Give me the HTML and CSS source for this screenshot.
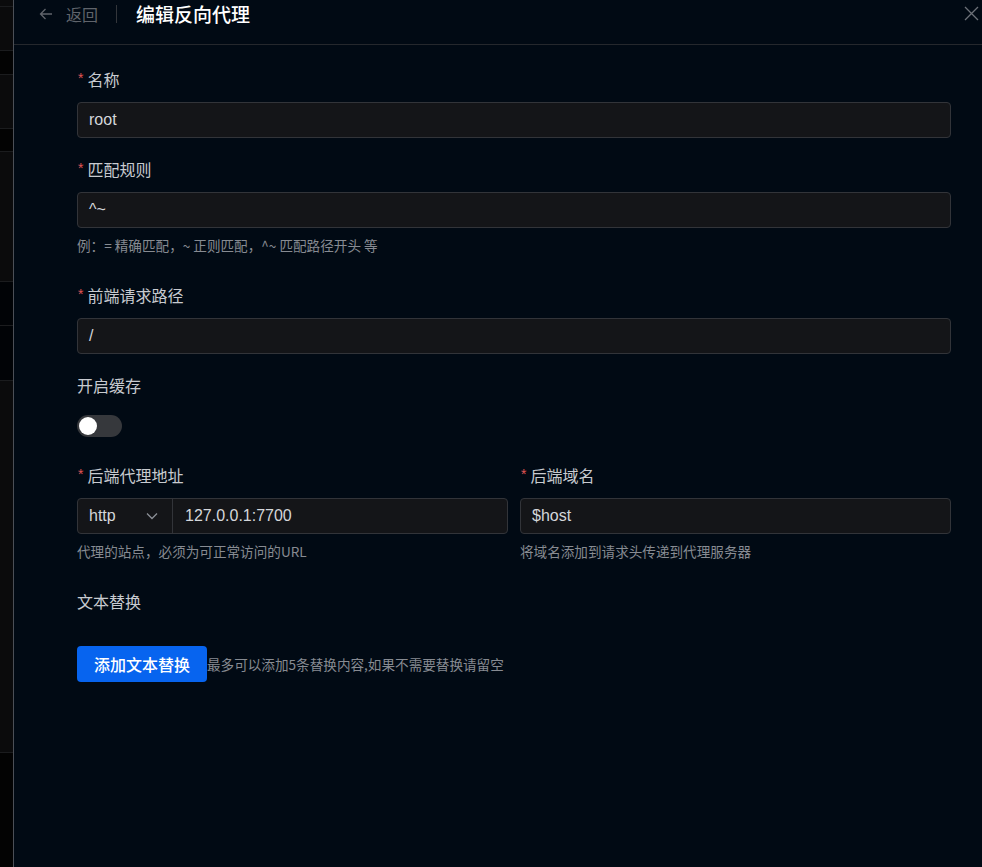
FILE: index.html
```html
<!DOCTYPE html>
<html lang="zh-CN">
<head>
<meta charset="utf-8">
<title>编辑反向代理</title>
<link rel="stylesheet" href="styles.css">
</head>
<body>
<div class="page">
  <div class="backdrop">
    <div class="bd bd-a" style="height:7px"></div>
    <div class="bd bd-a" style="height:44px"></div>
    <div class="bd bd-b" style="height:24px"></div>
    <div class="bd bd-a" style="height:54px"></div>
    <div class="bd bd-b" style="height:23px"></div>
    <div class="bd bd-a" style="height:130px"></div>
    <div class="bd bd-c" style="height:44px"></div>
    <div class="bd bd-c" style="height:55px"></div>
    <div class="bd bd-a" style="height:372px"></div>
    <div class="bd bd-b last"></div>
  </div>
  <div class="drawer">
    <div class="header">
      <div class="back">
        <svg class="arrow" width="14" height="14" viewBox="0 0 14 14" fill="none" stroke="currentColor" stroke-width="1.3"><path d="M13 7H1.5M6.5 2L1.5 7l5 5"/></svg>
        <span>返回</span>
      </div>
      <div class="sep"></div>
      <div class="title">编辑反向代理</div>
      <svg class="close" width="15" height="15" viewBox="0 0 15 15" fill="none" stroke="currentColor" stroke-width="1.3"><path d="M1 1l13 13M14 1L1 14"/></svg>
    </div>
    <div class="form">
      <div class="item">
        <div class="label"><span class="req">*</span>名称</div>
        <div class="input">root</div>
      </div>
      <div class="item with-help">
        <div class="label"><span class="req">*</span>匹配规则</div>
        <div class="input">^~</div>
        <div class="help">例：= 精确匹配，~ 正则匹配，^~ 匹配路径开头 等</div>
      </div>
      <div class="item">
        <div class="label"><span class="req">*</span>前端请求路径</div>
        <div class="input">/</div>
      </div>
      <div class="item">
        <div class="label">开启缓存</div>
        <div class="switch-wrap"><div class="switch"><div class="knob"></div></div></div>
      </div>
      <div class="row">
        <div class="item with-help col">
          <div class="label"><span class="req">*</span>后端代理地址</div>
          <div class="group">
            <div class="select">http
              <svg class="chev" width="12" height="8" viewBox="0 0 12 8" fill="none" stroke="currentColor" stroke-width="1.3"><path d="M1 1.5l5 5 5-5"/></svg>
            </div>
            <div class="group-input">127.0.0.1:7700</div>
          </div>
          <div class="help">代理的站点，必须为可正常访问的URL</div>
        </div>
        <div class="item with-help col">
          <div class="label"><span class="req">*</span>后端域名</div>
          <div class="input">$host</div>
          <div class="help">将域名添加到请求头传递到代理服务器</div>
        </div>
      </div>
      <div class="item replace">
        <div class="label">文本替换</div>
      </div>
      <div class="actions">
        <button class="btn">添加文本替换</button>
        <span class="hint">最多可以添加5条替换内容,如果不需要替换请留空</span>
      </div>
    </div>
  </div>
</div>
</body>
</html>
```
FILE: styles.css
```css
* { box-sizing: border-box; }
html, body { margin: 0; padding: 0; }
body {
  width: 982px;
  height: 867px;
  overflow: hidden;
  background: #010a14;
  font-family: "Liberation Sans", "Noto Sans CJK SC", sans-serif;
}
.page { display: flex; height: 867px; }
.backdrop {
  width: 13px;
  display: flex;
  flex-direction: column;
  flex: none;
}
.bd { border-bottom: 1px solid #1b1c1e; flex: none; }
.bd-a { background: #0b0b0c; }
.bd-b { background: #030303; }
.bd-c { background: #010306; }
.bd.last { flex: 1; border-bottom: none; }
.drawer {
  flex: 1;
  border-left: 1px solid #4b4f56;
  background: #010a14;
  display: flex;
  flex-direction: column;
}
.header {
  height: 45px;
  padding: 0 3px 17px 25px;
  display: flex;
  align-items: center;
  border-bottom: 1px solid #25282d;
}
.back {
  display: flex;
  align-items: center;
  color: #60646b;
  font-size: 16px;
  font-family: "Noto Sans CJK SC", sans-serif;
  line-height: 22px;
}
.arrow { margin-right: 13px; }
.sep {
  width: 1px;
  height: 18px;
  background: #33363b;
  margin: 0 19px 0 18px;
}
.title {
  color: #ffffff;
  font-size: 19px;
  font-weight: 500;
  font-family: "Noto Sans CJK SC", sans-serif;
  line-height: 26px;
  flex: 1;
}
.close { color: #6d7178; }
.form {
  padding: 23px 31px 0 63px;
  display: flex;
  flex-direction: column;
}
.item { margin-bottom: 20px; display: flex; flex-direction: column; }
.item.with-help { margin-bottom: 29px; }
.label {
  display: flex;
  align-items: center;
  height: 22px;
  font-size: 16px;
  line-height: 22px;
  color: #c8cbd0;
  margin-bottom: 12px;
  font-family: "Noto Sans CJK SC", sans-serif;
}
.req {
  color: #e25555;
  font-family: "Liberation Sans", sans-serif;
  font-size: 14px;
  line-height: 14px;
  margin-right: 4px;
  margin-left: 1px;
  position: relative;
  top: -1px;
}
.input, .group {
  height: 36px;
  border: 1px solid #323439;
  border-radius: 4px;
  background: #141518;
  color: #d4d7db;
  font-size: 16px;
  line-height: 34px;
  padding: 0 11px;
}
.help {
  margin-top: 7px;
  font-size: 13.6px;
  line-height: 20px;
  height: 20px;
  color: #878b92;
  font-family: "Noto Sans CJK SC", sans-serif;
}
.switch-wrap { height: 36px; display: flex; align-items: center; }
.switch {
  width: 45px;
  height: 22px;
  border-radius: 11px;
  background: #36383c;
  padding: 2px;
}
.knob {
  width: 18px;
  height: 18px;
  border-radius: 50%;
  background: #ffffff;
}
.row { display: flex; gap: 12px; }
.col { flex: 1; min-width: 0; }
.group { display: flex; padding: 0; }
.select {
  width: 95px;
  border-right: 1px solid #323439;
  padding: 0 11px;
  display: flex;
  align-items: center;
  justify-content: space-between;
}
.chev { color: #8b8f96; margin-right: 3px; }
.group-input { padding: 0 12px; }
.replace { margin-bottom: 22px; }
.actions { display: flex; align-items: center; }
.btn {
  height: 36px;
  width: 130px;
  border: none;
  border-radius: 4px;
  background: #0764ef;
  color: #ffffff;
  font-size: 16px;
  font-weight: 500;
  font-family: "Noto Sans CJK SC", sans-serif;
  padding: 0;
}
.hint {
  font-size: 13.6px;
  color: #878b92;
  font-family: "Noto Sans CJK SC", sans-serif;
  line-height: 20px;
}
```
